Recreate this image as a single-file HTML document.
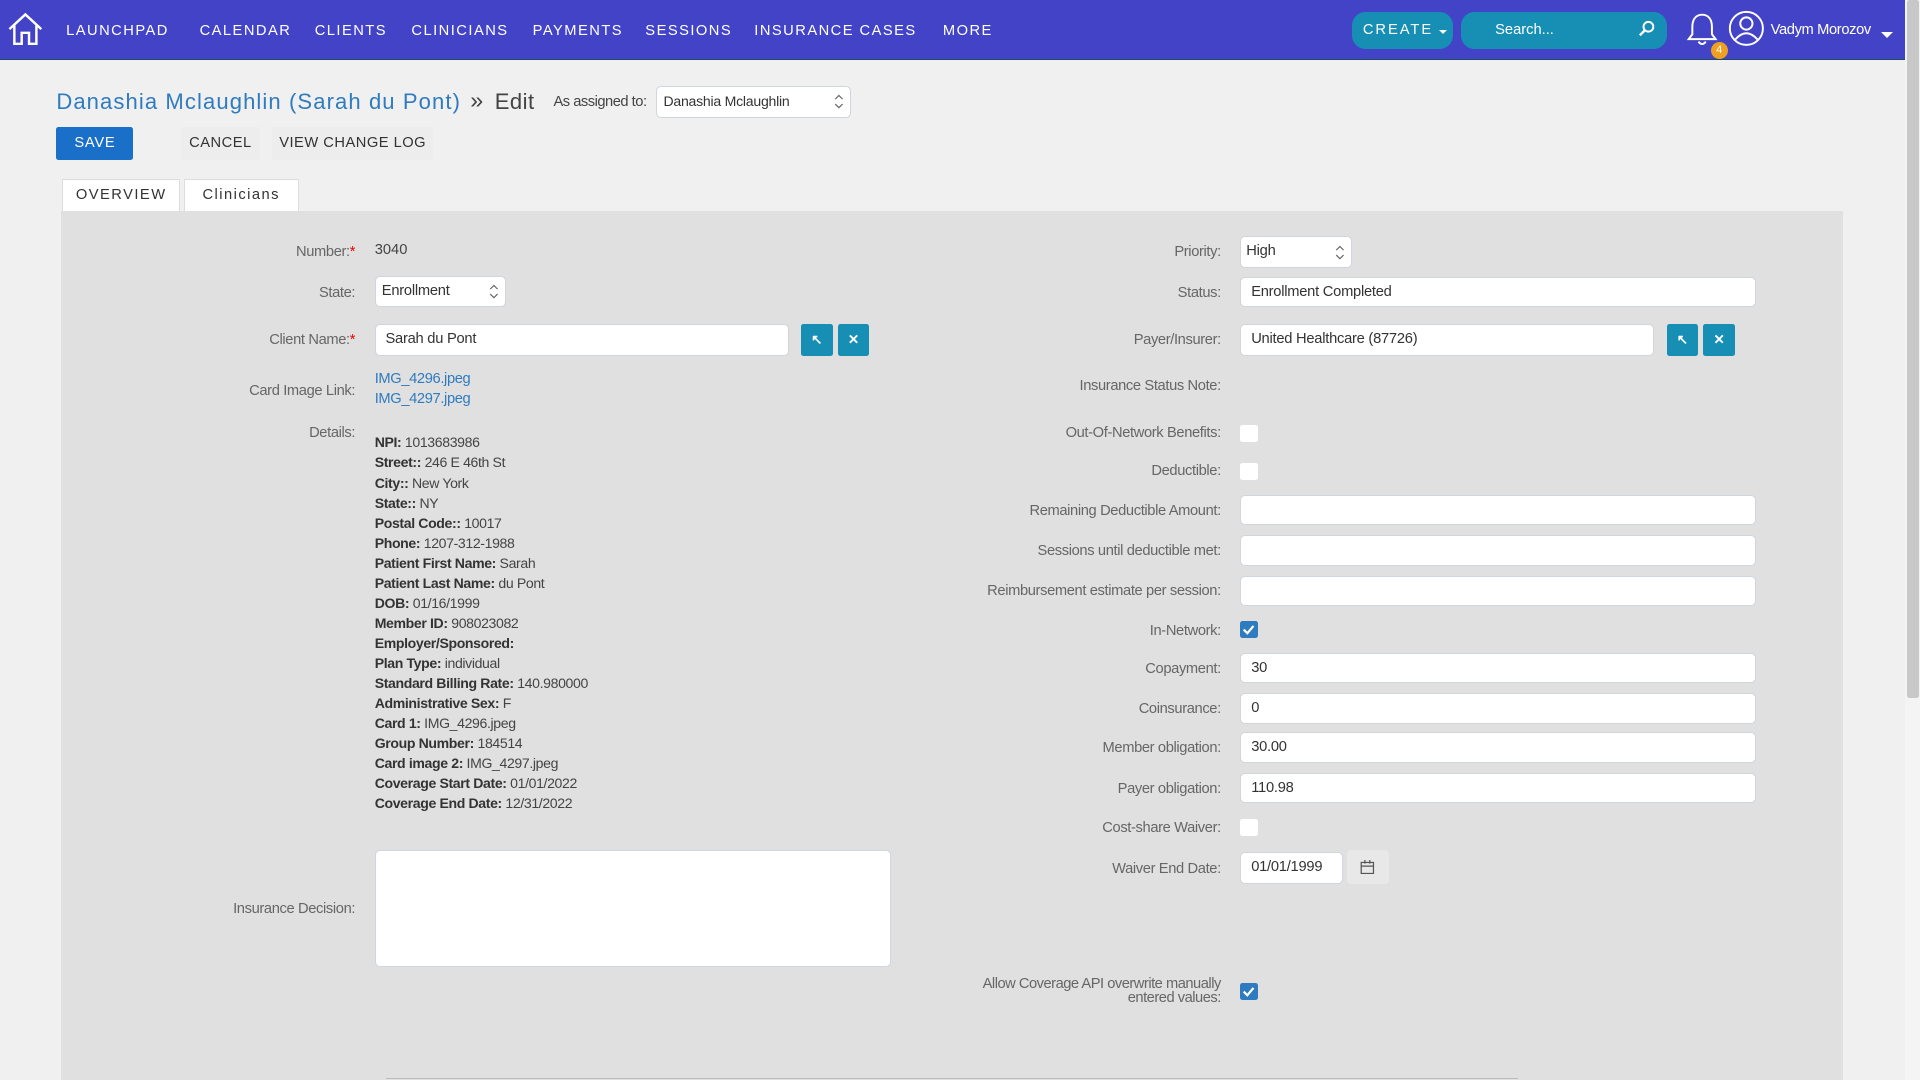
<!DOCTYPE html>
<html><head><meta charset="utf-8"><style>
*{box-sizing:border-box;margin:0;padding:0}
html,body{width:1920px;height:1080px;overflow:hidden;background:#f0f0f0}
#root{zoom:1.2245;width:1568px;height:882px;position:relative;font-family:"Liberation Sans",sans-serif;color:#444;font-size:12px}
.a{position:absolute;white-space:nowrap}
.nav{position:absolute;left:0;top:0;width:1556px;height:49px;background:#4343c8;border-bottom:1px solid #1b4d5e}
.nav .i{position:absolute;top:19px;color:#fff;font-size:12px;letter-spacing:1.2px}
.lbl{position:absolute;text-align:right;color:#666;font-size:12px;letter-spacing:-0.3px;white-space:nowrap;transform:translateY(-50%)}
.inp{position:absolute;background:#fff;border:1px solid #cfd6de;border-radius:4px;height:25px;padding-left:8px;line-height:24px;font-size:12px;letter-spacing:-0.2px;color:#333}
.cb{position:absolute;width:14px;height:14px;background:#fff;border-radius:2px}
.cb.on{background:#2f7bbf}
.btn{position:absolute;width:26px;height:26px;background:#178fb5;border-radius:2px;color:#fff;text-align:center;line-height:26px;font-size:11px;font-weight:bold}
.det div{height:16.35px;line-height:16px;font-size:11.5px;letter-spacing:-0.3px;color:#444}
.det b{color:#333}
.req{color:#e00}
</style></head><body><div id="root">
<div class="nav">
<svg class="a" style="left:6px;top:10px" width="30" height="28" viewBox="0 0 30 28"><path d="M2 14 L15 2 L28 14 M6 11 V26 H12 V17 H18 V26 H24 V11" fill="none" stroke="#fff" stroke-width="2"/></svg>
<span class="i" style="left:54px">LAUNCHPAD</span>
<span class="i" style="left:163px">CALENDAR</span>
<span class="i" style="left:257px">CLIENTS</span>
<span class="i" style="left:336px">CLINICIANS</span>
<span class="i" style="left:435px">PAYMENTS</span>
<span class="i" style="left:527px">SESSIONS</span>
<span class="i" style="left:616px">INSURANCE CASES</span>
<span class="i" style="left:770px">MORE</span>
<div class="a" style="left:1104px;top:10px;width:83px;height:30px;background:#178fb5;border-radius:11px;color:#fff;font-size:12px;letter-spacing:1.6px;padding:8px 0 0 9px">CREATE <span style="display:inline-block;width:0;height:0;border-left:4px solid transparent;border-right:4px solid transparent;border-top:4px solid #fff;margin-left:0px"></span></div>
<div class="a" style="left:1193px;top:10px;width:168px;height:30px;background:#178fb5;border-radius:11px;color:#fff;font-size:12px;padding:8px 0 0 28px">Search...</div>
<svg class="a" style="left:1338px;top:16px" width="14" height="14" viewBox="0 0 14 14"><circle cx="8.5" cy="5.5" r="4" fill="none" stroke="#fff" stroke-width="1.6"/><path d="M5.5 8.5 L1.5 12.5" stroke="#fff" stroke-width="2"/></svg>
<svg class="a" style="left:1376px;top:9px" width="28" height="30" viewBox="0 0 28 30"><path d="M14 3 C8 3 6 8 6 13 V19 L3 23 H25 L22 19 V13 C22 8 20 3 14 3 Z M11 25 Q14 29 17 25" fill="none" stroke="#fff" stroke-width="1.6"/></svg>
<div class="a" style="left:1397px;top:34px;width:14px;height:14px;border-radius:7px;background:#f0a020;color:#fff;font-size:9px;text-align:center;line-height:14px">4</div>
<svg class="a" style="left:1411px;top:8px" width="30" height="30" viewBox="0 0 30 30"><circle cx="15" cy="15" r="13.5" fill="none" stroke="#fff" stroke-width="1.6"/><circle cx="15" cy="11" r="5" fill="none" stroke="#fff" stroke-width="1.6"/><path d="M6 24 Q15 14 24 24" fill="none" stroke="#fff" stroke-width="1.6"/></svg>
<span class="a" style="left:1446px;top:18px;color:#fff;font-size:12px;letter-spacing:-0.3px">Vadym Morozov</span>
<span class="a" style="left:1536px;top:26px;width:0;height:0;border-left:5px solid transparent;border-right:5px solid transparent;border-top:5px solid #fff"></span>
</div>
<div class="a" style="left:1556px;top:0;width:12px;height:882px;background:#f4f4f4"></div>
<div class="a" style="left:1557px;top:0;width:10px;height:570px;background:#c8c8c8;border-radius:2px"></div>

<span class="a" style="left:46px;top:73px;font-size:18px;color:#2f7bbf;letter-spacing:0.9px">Danashia Mclaughlin (Sarah du Pont)</span>
<span class="a" style="left:384px;top:71px;font-size:19px;color:#444">»</span>
<span class="a" style="left:404px;top:73px;font-size:18px;color:#444;letter-spacing:0.4px">Edit</span>
<span class="a" style="left:452px;top:77px;font-size:12px;letter-spacing:-0.4px;color:#444">As assigned to:</span>
<div class="inp" style="left:536px;top:70px;width:159px;height:26px;padding-left:5px;font-size:11.5px">Danashia Mclaughlin</div>
<svg class="a" style="left:681px;top:76px" width="8" height="14" viewBox="0 0 8 14"><path d="M1 5 L4 2 L7 5 M1 9 L4 12 L7 9" fill="none" stroke="#666"/></svg>
<div class="a" style="left:46px;top:104px;width:63px;height:27px;background:#1a70c8;border-radius:2px;color:#fff;text-align:center;line-height:27px;font-size:12px;letter-spacing:0.6px">SAVE</div>
<div class="a" style="left:148px;top:104px;width:64px;height:27px;background:#ededed;text-align:center;line-height:27px;font-size:12px;letter-spacing:0.4px;color:#333">CANCEL</div>
<div class="a" style="left:222px;top:104px;width:132px;height:27px;background:#ededed;text-align:center;line-height:27px;font-size:12px;letter-spacing:0.4px;color:#333">VIEW CHANGE LOG</div>
<div class="a" style="left:51px;top:146px;width:96px;height:26px;background:#fff;border:1px solid #ddd;border-bottom:none;text-align:center;line-height:25px;font-size:12px;letter-spacing:1.2px;color:#333">OVERVIEW</div>
<div class="a" style="left:150px;top:146px;width:94px;height:26px;background:#fff;border:1px solid #ddd;border-bottom:none;text-align:center;line-height:25px;font-size:12px;letter-spacing:1.2px;color:#333">Clinicians</div>
<div class="a" style="left:50px;top:172px;width:1455px;height:710px;background:#e0e0e0"></div>
<div class="a" style="left:315px;top:880px;width:925px;height:1px;background:#bbb"></div>

<div class="lbl" style="right:1278px;top:206px">Number:<span class="req">*</span></div>
<span class="a" style="left:306px;top:198px;font-size:12px">3040</span>
<div class="lbl" style="right:1278px;top:239px">State:</div>
<div class="inp" style="left:306px;top:225px;width:107px;height:26px;padding-left:5px">Enrollment</div>
<svg class="a" style="left:399px;top:231px" width="8" height="14" viewBox="0 0 8 14"><path d="M1 5 L4 2 L7 5 M1 9 L4 12 L7 9" fill="none" stroke="#666"/></svg>
<div class="lbl" style="right:1278px;top:278px">Client Name:<span class="req">*</span></div>
<div class="inp" style="left:306px;top:265px;width:338px;height:26px">Sarah du Pont</div>
<div class="btn" style="left:654px;top:265px">↖</div><div class="btn" style="left:684px;top:265px">✕</div>
<div class="lbl" style="right:1278px;top:319px">Card Image Link:</div>
<span class="a" style="left:306px;top:303px;color:#2f7bbf;font-size:12px;letter-spacing:-0.3px">IMG_4296.jpeg</span>
<span class="a" style="left:306px;top:319px;color:#2f7bbf;font-size:12px;letter-spacing:-0.3px">IMG_4297.jpeg</span>
<div class="lbl" style="right:1278px;top:354px">Details:</div>
<div class="a det" style="left:306px;top:354px">
<div><b>NPI:</b> 1013683986</div><div><b>Street::</b> 246 E 46th St</div><div><b>City::</b> New York</div><div><b>State::</b> NY</div><div><b>Postal Code::</b> 10017</div><div><b>Phone:</b> 1207-312-1988</div><div><b>Patient First Name:</b> Sarah</div><div><b>Patient Last Name:</b> du Pont</div><div><b>DOB:</b> 01/16/1999</div><div><b>Member ID:</b> 908023082</div><div><b>Employer/Sponsored:</b></div><div><b>Plan Type:</b> individual</div><div><b>Standard Billing Rate:</b> 140.980000</div><div><b>Administrative Sex:</b> F</div><div><b>Card 1:</b> IMG_4296.jpeg</div><div><b>Group Number:</b> 184514</div><div><b>Card image 2:</b> IMG_4297.jpeg</div><div><b>Coverage Start Date:</b> 01/01/2022</div><div><b>Coverage End Date:</b> 12/31/2022</div>
</div>
<div class="lbl" style="right:1278px;top:742px">Insurance Decision:</div>
<div class="inp" style="left:306px;top:694px;width:422px;height:96px"></div>

<div class="lbl" style="right:571px;top:206px">Priority:</div>
<div class="inp" style="left:1013px;top:193px;width:91px;height:26px;padding-left:4px">High</div>
<svg class="a" style="left:1090px;top:199px" width="8" height="14" viewBox="0 0 8 14"><path d="M1 5 L4 2 L7 5 M1 9 L4 12 L7 9" fill="none" stroke="#666"/></svg>
<div class="lbl" style="right:571px;top:239px">Status:</div>
<div class="inp" style="left:1013px;top:226px;width:421px">Enrollment Completed</div>
<div class="lbl" style="right:571px;top:278px">Payer/Insurer:</div>
<div class="inp" style="left:1013px;top:265px;width:338px;height:26px">United Healthcare (87726)</div>
<div class="btn" style="left:1361px;top:265px">↖</div><div class="btn" style="left:1391px;top:265px">✕</div>
<div class="lbl" style="right:571px;top:315px">Insurance Status Note:</div>
<div class="lbl" style="right:571px;top:354px">Out-Of-Network Benefits:</div><div class="cb" style="left:1013px;top:347px"></div>
<div class="lbl" style="right:571px;top:385px">Deductible:</div><div class="cb" style="left:1013px;top:378px"></div>
<div class="lbl" style="right:571px;top:417px">Remaining Deductible Amount:</div><div class="inp" style="left:1013px;top:404px;width:421px"></div>
<div class="lbl" style="right:571px;top:450px">Sessions until deductible met:</div><div class="inp" style="left:1013px;top:437px;width:421px"></div>
<div class="lbl" style="right:571px;top:483px">Reimbursement estimate per session:</div><div class="inp" style="left:1013px;top:470px;width:421px"></div>
<div class="lbl" style="right:571px;top:515px">In-Network:</div><div class="cb on" style="left:1013px;top:507px"><svg width="14" height="14"><path d="M3 7 L6 10 L11 4" fill="none" stroke="#fff" stroke-width="1.8"/></svg></div>
<div class="lbl" style="right:571px;top:546px">Copayment:</div><div class="inp" style="left:1013px;top:533px;width:421px">30</div>
<div class="lbl" style="right:571px;top:579px">Coinsurance:</div><div class="inp" style="left:1013px;top:566px;width:421px">0</div>
<div class="lbl" style="right:571px;top:611px">Member obligation:</div><div class="inp" style="left:1013px;top:598px;width:421px">30.00</div>
<div class="lbl" style="right:571px;top:644px">Payer obligation:</div><div class="inp" style="left:1013px;top:631px;width:421px">110.98</div>
<div class="lbl" style="right:571px;top:676px">Cost-share Waiver:</div><div class="cb" style="left:1013px;top:669px"></div>
<div class="lbl" style="right:571px;top:710px">Waiver End Date:</div><div class="inp" style="left:1013px;top:696px;width:84px;height:26px">01/01/1999</div>
<div class="a" style="left:1100px;top:694px;width:34px;height:28px;background:#e8e8e8;border-radius:3px"><svg style="position:absolute;left:11px;top:8px" width="12" height="12" viewBox="0 0 12 12"><rect x="1" y="2" width="10" height="9" fill="none" stroke="#555"/><path d="M1 5 H11 M4 0 V3 M8 0 V3" stroke="#555"/></svg></div>
<div class="a" style="right:571px;top:799px;text-align:right;color:#666;font-size:12px;letter-spacing:-0.4px;line-height:11px">Allow Coverage API overwrite manually<br>entered values:</div>
<div class="cb on" style="left:1013px;top:803px"><svg width="14" height="14"><path d="M3 7 L6 10 L11 4" fill="none" stroke="#fff" stroke-width="1.8"/></svg></div>
</div></body></html>
